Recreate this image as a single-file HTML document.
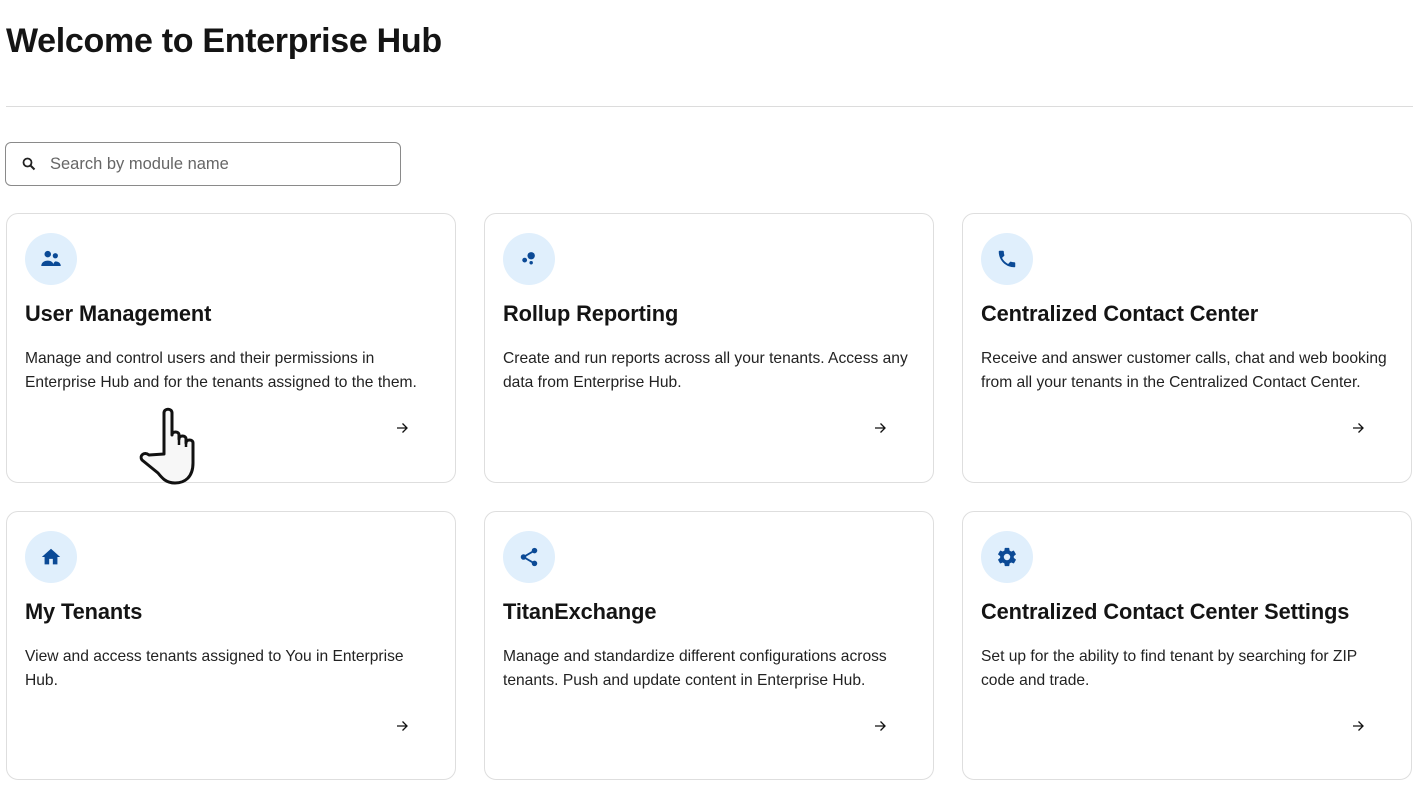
<!DOCTYPE html>
<html><head><meta charset="utf-8"><style>
*{box-sizing:border-box;margin:0;padding:0}
body{width:1423px;height:792px;background:#fff;font-family:"Liberation Sans",sans-serif;color:#141414;position:relative;overflow:hidden}
h1{position:absolute;left:6px;top:22px;font-size:34px;font-weight:bold;letter-spacing:-0.3px}
.rule{position:absolute;left:6px;top:106px;width:1407px;height:1px;background:#dcdcdc}
.search{position:absolute;left:5px;top:142px;width:396px;height:44px;border:1px solid #8a8a8a;border-radius:6px}
.search span{position:absolute;left:44px;top:12px;font-size:16.5px;color:#666}
.search svg{position:absolute;left:16px;top:14px}
.card{position:absolute;width:450px;height:270px;border:1px solid #dedede;border-radius:12px}
.ic{position:absolute;left:18px;top:19px;width:52px;height:52px;border-radius:50%;background:#e0effc;display:flex;align-items:center;justify-content:center}
.t{position:absolute;left:18px;top:87px;font-size:21.8px;font-weight:bold;letter-spacing:-0.1px}
.d{position:absolute;left:18px;top:133px;white-space:nowrap;font-size:15.6px;line-height:24px;color:#222}
.ar{position:absolute;left:388px;top:207px}
</style></head><body>
<h1>Welcome to Enterprise Hub</h1>
<div class="rule"></div>
<div class="search"><svg width="14" height="14" viewBox="0 0 14 14"><circle cx="5.5" cy="5.5" r="4" fill="none" stroke="#222" stroke-width="1.8"/><path d="M8.5 8.5L12.5 12.5" stroke="#222" stroke-width="2"/></svg><span>Search by module name</span></div>

<div class="card" style="left:6px;top:213px"><div class="ic"><svg width="26" height="26" viewBox="0 0 24 24" fill="#0b4a96"><circle cx="9" cy="7.5" r="3"/><circle cx="16" cy="9" r="2.4"/><path d="M3 18.5c0-3 2.5-5 6-5s5.5 2 5.5 5z"/><path d="M14 18.5c0-2 .5-3.5 2-4.3 3 0 5 1.7 5 4.3z"/></svg></div><div class="t">User Management</div><div class="d">Manage and control users and their permissions in<br>Enterprise Hub and for the tenants assigned to the them.</div><svg class="ar" width="14" height="14" viewBox="0 0 14 14"><path d="M2 7h10M7.5 2.5L12 7l-4.5 4.5" stroke="#111" stroke-width="1.3" fill="none"/></svg></div>

<div class="card" style="left:484px;top:213px"><div class="ic"><svg width="26" height="26" viewBox="0 0 24 24" fill="#0b4a96"><circle cx="14" cy="9" r="3.4"/><circle cx="8" cy="13" r="2.2"/><circle cx="14" cy="15.5" r="1.6"/></svg></div><div class="t">Rollup Reporting</div><div class="d">Create and run reports across all your tenants. Access any<br>data from Enterprise Hub.</div><svg class="ar" width="14" height="14" viewBox="0 0 14 14"><path d="M2 7h10M7.5 2.5L12 7l-4.5 4.5" stroke="#111" stroke-width="1.3" fill="none"/></svg></div>

<div class="card" style="left:962px;top:213px"><div class="ic"><svg width="22" height="22" viewBox="0 0 24 24" fill="#0b4a96"><path d="M6.6 10.8c1.4 2.8 3.8 5.1 6.6 6.6l2.2-2.2c.3-.3.7-.4 1-.2 1.1.4 2.3.6 3.6.6.6 0 1 .4 1 1V20c0 .6-.4 1-1 1C10.6 21 3 13.4 3 4c0-.6.4-1 1-1h3.5c.6 0 1 .4 1 1 0 1.3.2 2.5.6 3.6.1.3 0 .7-.2 1z"/></svg></div><div class="t">Centralized Contact Center</div><div class="d">Receive and answer customer calls, chat and web booking<br>from all your tenants in the Centralized Contact Center.</div><svg class="ar" width="14" height="14" viewBox="0 0 14 14"><path d="M2 7h10M7.5 2.5L12 7l-4.5 4.5" stroke="#111" stroke-width="1.3" fill="none"/></svg></div>

<div class="card" style="left:6px;top:511px;height:269px"><div class="ic"><svg width="22" height="22" viewBox="0 0 24 24" fill="#0b4a96"><path d="M10 20v-6h4v6h5v-8h3L12 3 2 12h3v8z"/></svg></div><div class="t">My Tenants</div><div class="d">View and access tenants assigned to You in Enterprise<br>Hub.</div><svg class="ar" width="14" height="14" viewBox="0 0 14 14"><path d="M2 7h10M7.5 2.5L12 7l-4.5 4.5" stroke="#111" stroke-width="1.3" fill="none"/></svg></div>

<div class="card" style="left:484px;top:511px;height:269px"><div class="ic"><svg width="22" height="22" viewBox="0 0 24 24" fill="#0b4a96"><circle cx="18" cy="5" r="3"/><circle cx="6" cy="12" r="3"/><circle cx="18" cy="19" r="3"/><path d="M18 5L6 12l12 7" stroke="#0b4a96" stroke-width="2" fill="none"/></svg></div><div class="t">TitanExchange</div><div class="d">Manage and standardize different configurations across<br>tenants. Push and update content in Enterprise Hub.</div><svg class="ar" width="14" height="14" viewBox="0 0 14 14"><path d="M2 7h10M7.5 2.5L12 7l-4.5 4.5" stroke="#111" stroke-width="1.3" fill="none"/></svg></div>

<div class="card" style="left:962px;top:511px;height:269px"><div class="ic"><svg width="22" height="22" viewBox="0 0 24 24" fill="#0b4a96"><path d="M19.4 13c.04-.3.06-.6.06-1s-.02-.7-.06-1l2.1-1.6c.2-.15.25-.4.12-.64l-2-3.46c-.12-.22-.39-.3-.61-.22l-2.5 1c-.52-.4-1.08-.73-1.69-.98l-.38-2.65A.49.49 0 0 0 14 2h-4c-.25 0-.46.18-.49.42l-.38 2.65c-.61.25-1.17.59-1.69.98l-2.490-1c-.23-.09-.49 0-.61.22l-2 3.46c-.13.22-.07.49.12.64L4.57 11c-.04.32-.07.65-.07 1s.03.68.07 1l-2.11 1.65c-.19.15-.24.42-.12.64l2 3.46c.12.22.39.3.61.22l2.49-1c.52.4 1.08.73 1.69.98l.38 2.65c.03.24.24.42.49.42h4c.25 0 .46-.18.49-.42l.38-2.65c.61-.25 1.17-.59 1.69-.98l2.49 1c.23.09.49 0 .61-.22l2-3.46c.12-.22.07-.49-.12-.64zM12 15.5A3.5 3.5 0 1 1 12 8.5a3.5 3.5 0 0 1 0 7z"/></svg></div><div class="t">Centralized Contact Center Settings</div><div class="d">Set up for the ability to find tenant by searching for ZIP<br>code and trade.</div><svg class="ar" width="14" height="14" viewBox="0 0 14 14"><path d="M2 7h10M7.5 2.5L12 7l-4.5 4.5" stroke="#111" stroke-width="1.3" fill="none"/></svg></div>

<svg style="position:absolute;left:136px;top:404px" width="70" height="84" viewBox="0 0 70 84"><path d="M28 50V9c0-5 8-5 8 0v22 0c0-4 7-4 7 0v4c0-4 7-4 7 0v4c0-4 7-4 7 0v20c0 14-8 20-18 20-9 0-13-5-17-10L6 56c-3-4 2-9 7-5z" fill="#f7f7f7" stroke="#111" stroke-width="3" stroke-linejoin="round"/><path d="M43 31v10M50 35v8" stroke="#111" stroke-width="2.5"/></svg>
</body></html>
